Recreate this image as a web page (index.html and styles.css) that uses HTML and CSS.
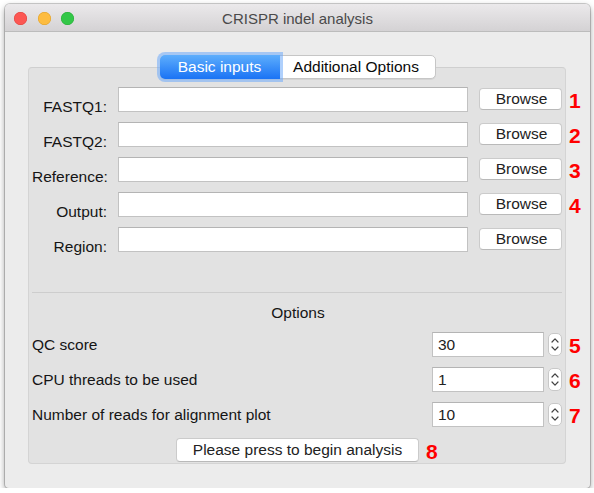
FILE: index.html
```html
<!DOCTYPE html>
<html>
<head>
<meta charset="utf-8">
<link rel="stylesheet" href="styles.css">
</head>
<body>
<div class="window">
  <div class="titlebar">
    <div class="lights">
      <span class="light red"></span>
      <span class="light yellow"></span>
      <span class="light green"></span>
    </div>
    <div class="title">CRISPR indel analysis</div>
    <div></div>
  </div>
  <div class="content">
    <div class="tabs">
      <div class="seg">
        <span class="tab active">Basic inputs</span>
        <span class="tab">Additional Options</span>
      </div>
    </div>
    <div class="panel">
      <div class="files">
        <div class="frow">
          <span class="flabel">FASTQ1:</span><span class="field"></span><span class="btn">Browse</span>
          <span class="anno">1</span>
        </div>
        <div class="frow">
          <span class="flabel">FASTQ2:</span><span class="field"></span><span class="btn">Browse</span>
          <span class="anno">2</span>
        </div>
        <div class="frow">
          <span class="flabel">Reference:</span><span class="field"></span><span class="btn">Browse</span>
          <span class="anno">3</span>
        </div>
        <div class="frow">
          <span class="flabel">Output:</span><span class="field"></span><span class="btn">Browse</span>
          <span class="anno">4</span>
        </div>
        <div class="frow">
          <span class="flabel">Region:</span><span class="field"></span><span class="btn">Browse</span>
        </div>
      </div>
      <div class="sep"></div>
      <div class="options-title">Options</div>
      <div class="spins">
        <div class="srow">
          <span class="slabel">QC score</span>
          <span class="sfield">30</span>
          <span class="stepper"><svg width="14" height="23" viewBox="0 0 14 23"><path d="M4 9 L7 5.8 L10 9" fill="none" stroke="#444" stroke-width="1.2" stroke-linecap="round" stroke-linejoin="round"/><path d="M4 14 L7 17.2 L10 14" fill="none" stroke="#444" stroke-width="1.2" stroke-linecap="round" stroke-linejoin="round"/></svg></span>
          <span class="anno">5</span>
        </div>
        <div class="srow">
          <span class="slabel">CPU threads to be used</span>
          <span class="sfield">1</span>
          <span class="stepper"><svg width="14" height="23" viewBox="0 0 14 23"><path d="M4 9 L7 5.8 L10 9" fill="none" stroke="#444" stroke-width="1.2" stroke-linecap="round" stroke-linejoin="round"/><path d="M4 14 L7 17.2 L10 14" fill="none" stroke="#444" stroke-width="1.2" stroke-linecap="round" stroke-linejoin="round"/></svg></span>
          <span class="anno">6</span>
        </div>
        <div class="srow">
          <span class="slabel">Number of reads for alignment plot</span>
          <span class="sfield">10</span>
          <span class="stepper"><svg width="14" height="23" viewBox="0 0 14 23"><path d="M4 9 L7 5.8 L10 9" fill="none" stroke="#444" stroke-width="1.2" stroke-linecap="round" stroke-linejoin="round"/><path d="M4 14 L7 17.2 L10 14" fill="none" stroke="#444" stroke-width="1.2" stroke-linecap="round" stroke-linejoin="round"/></svg></span>
          <span class="anno">7</span>
        </div>
      </div>
      <div class="go-row">
        <span class="go">Please press to begin analysis<span class="anno anno8">8</span></span>
      </div>
    </div>
  </div>
</div>
</body>
</html>
```
FILE: styles.css
```css
* { box-sizing: border-box; }
html, body { margin: 0; padding: 0; background: #ffffff; }
body {
  font-family: "Liberation Sans", Arial, sans-serif;
  font-size: 15.5px;
  color: #151515;
}
.window {
  margin: 4px 0 0 5px;
  width: 585px;
  height: 484px;
  background: #ececec;
  border-radius: 5px 5px 4px 4px;
  box-shadow: 0 0 0 1px rgba(0,0,0,0.18), 0 3px 7px rgba(0,0,0,0.4);
  overflow: hidden;
}
.titlebar {
  height: 28px;
  display: grid;
  grid-template-columns: 1fr auto 1fr;
  align-items: center;
  background: linear-gradient(#ebe9eb, #d4d2d4);
  border-bottom: 1px solid #bcbcbc;
}
.lights {
  display: flex;
  gap: 10.5px;
  padding-left: 9px;
  padding-top: 2px;
}
.light {
  width: 13px;
  height: 13px;
  border-radius: 50%;
  display: block;
}
.red { background: #fc5753; box-shadow: inset 0 0 0 0.5px #df3e3a; }
.yellow { background: #fdbc40; box-shadow: inset 0 0 0 0.5px #de9e25; }
.green { background: #33c748; box-shadow: inset 0 0 0 0.5px #27aa35; }
.title {
  font-size: 15px;
  color: #4a4a4a;
  padding-top: 1px;
}
.content {
  padding: 23px 24px 0 23px;
}
.tabs {
  display: flex;
  justify-content: center;
  margin-bottom: -12px;
  position: relative;
  z-index: 1;
  padding-left: 1px;
}
.seg {
  display: flex;
  height: 24px;
  background: #ffffff;
  border: 1px solid #c6c6c6;
  border-radius: 5px;
  box-shadow: 0 1px 0 rgba(0,0,0,0.06);
}
.tab {
  display: flex;
  align-items: center;
  justify-content: center;
  height: 22px;
  color: #0a0a0a;
}
.tab.active {
  width: 120px;
  margin: -1px 0 -1px -1px;
  height: 24px;
  color: #ffffff;
  background: linear-gradient(#5eaefc, #1a73f5);
  border-radius: 5px 0 0 5px;
  box-shadow: 0 0 0 3px rgba(110,170,250,0.55);
}
.tab:not(.active) {
  width: 155px;
  padding-right: 2px;
}
.panel {
  height: 397px;
  background: #e2e2e2;
  border: 1px solid #d4d4d4;
  border-top-color: #cfcfcf;
  border-radius: 4px;
  padding: 19px 3px 0 3px;
  display: flex;
  flex-direction: column;
}
.files {
  display: flex;
  flex-direction: column;
  gap: 10px;
}
.frow {
  position: relative;
  display: grid;
  grid-template-columns: 75px 1fr 83px;
  column-gap: 11px;
  align-items: start;
}
.flabel {
  text-align: right;
  line-height: 18px;
  padding-top: 11px;
  margin-bottom: -4px;
  white-space: nowrap;
}
.field {
  height: 25px;
  background: #ffffff;
  border: 1px solid #c2c2c2;
  border-top-color: #b4b4b4;
}
.btn {
  margin-top: 1px;
  height: 22px;
  background: #ffffff;
  border: 1px solid #cbcbcb;
  border-bottom-color: #b9b9b9;
  border-radius: 4px;
  display: flex;
  align-items: center;
  justify-content: center;
  padding-left: 2px;
  color: #222;
}
.anno {
  position: absolute;
  left: calc(100% + 7px);
  top: 1px;
  line-height: 25px;
  font-size: 21px;
  font-weight: bold;
  color: #ff0000;
}
.sep {
  margin-top: 40px;
  height: 1px;
  background: #cdcdcd;
}
.options-title {
  margin-top: 11px;
  line-height: 18px;
  text-align: center;
  padding-left: 2px;
}
.spins {
  margin-top: 10px;
  display: flex;
  flex-direction: column;
  gap: 10px;
}
.srow {
  position: relative;
  display: flex;
  align-items: center;
  height: 25px;
}
.slabel {
  flex: 1;
  white-space: nowrap;
}
.sfield {
  width: 112px;
  height: 25px;
  background: #ffffff;
  border: 1px solid #c2c2c2;
  border-top-color: #b4b4b4;
  padding-left: 5px;
  line-height: 23px;
  color: #222;
}
.stepper {
  margin-left: 4px;
  width: 14px;
  height: 23px;
  background: #ffffff;
  border: 1px solid #c8c8c8;
  border-radius: 5px;
  display: flex;
  align-items: center;
  justify-content: center;
}
.stepper svg { display: block; margin: -1px; }
.go-row {
  margin-top: 11px;
  display: flex;
  justify-content: center;
  padding-left: 1px;
}
.go {
  position: relative;
  width: 243px;
  height: 24px;
  background: #ffffff;
  border: 1px solid #cbcbcb;
  border-bottom-color: #b9b9b9;
  border-radius: 4px;
  display: flex;
  align-items: center;
  justify-content: center;
  color: #222;
}
.anno8 {
  left: calc(100% + 8px);
  top: 0px;
}
```
